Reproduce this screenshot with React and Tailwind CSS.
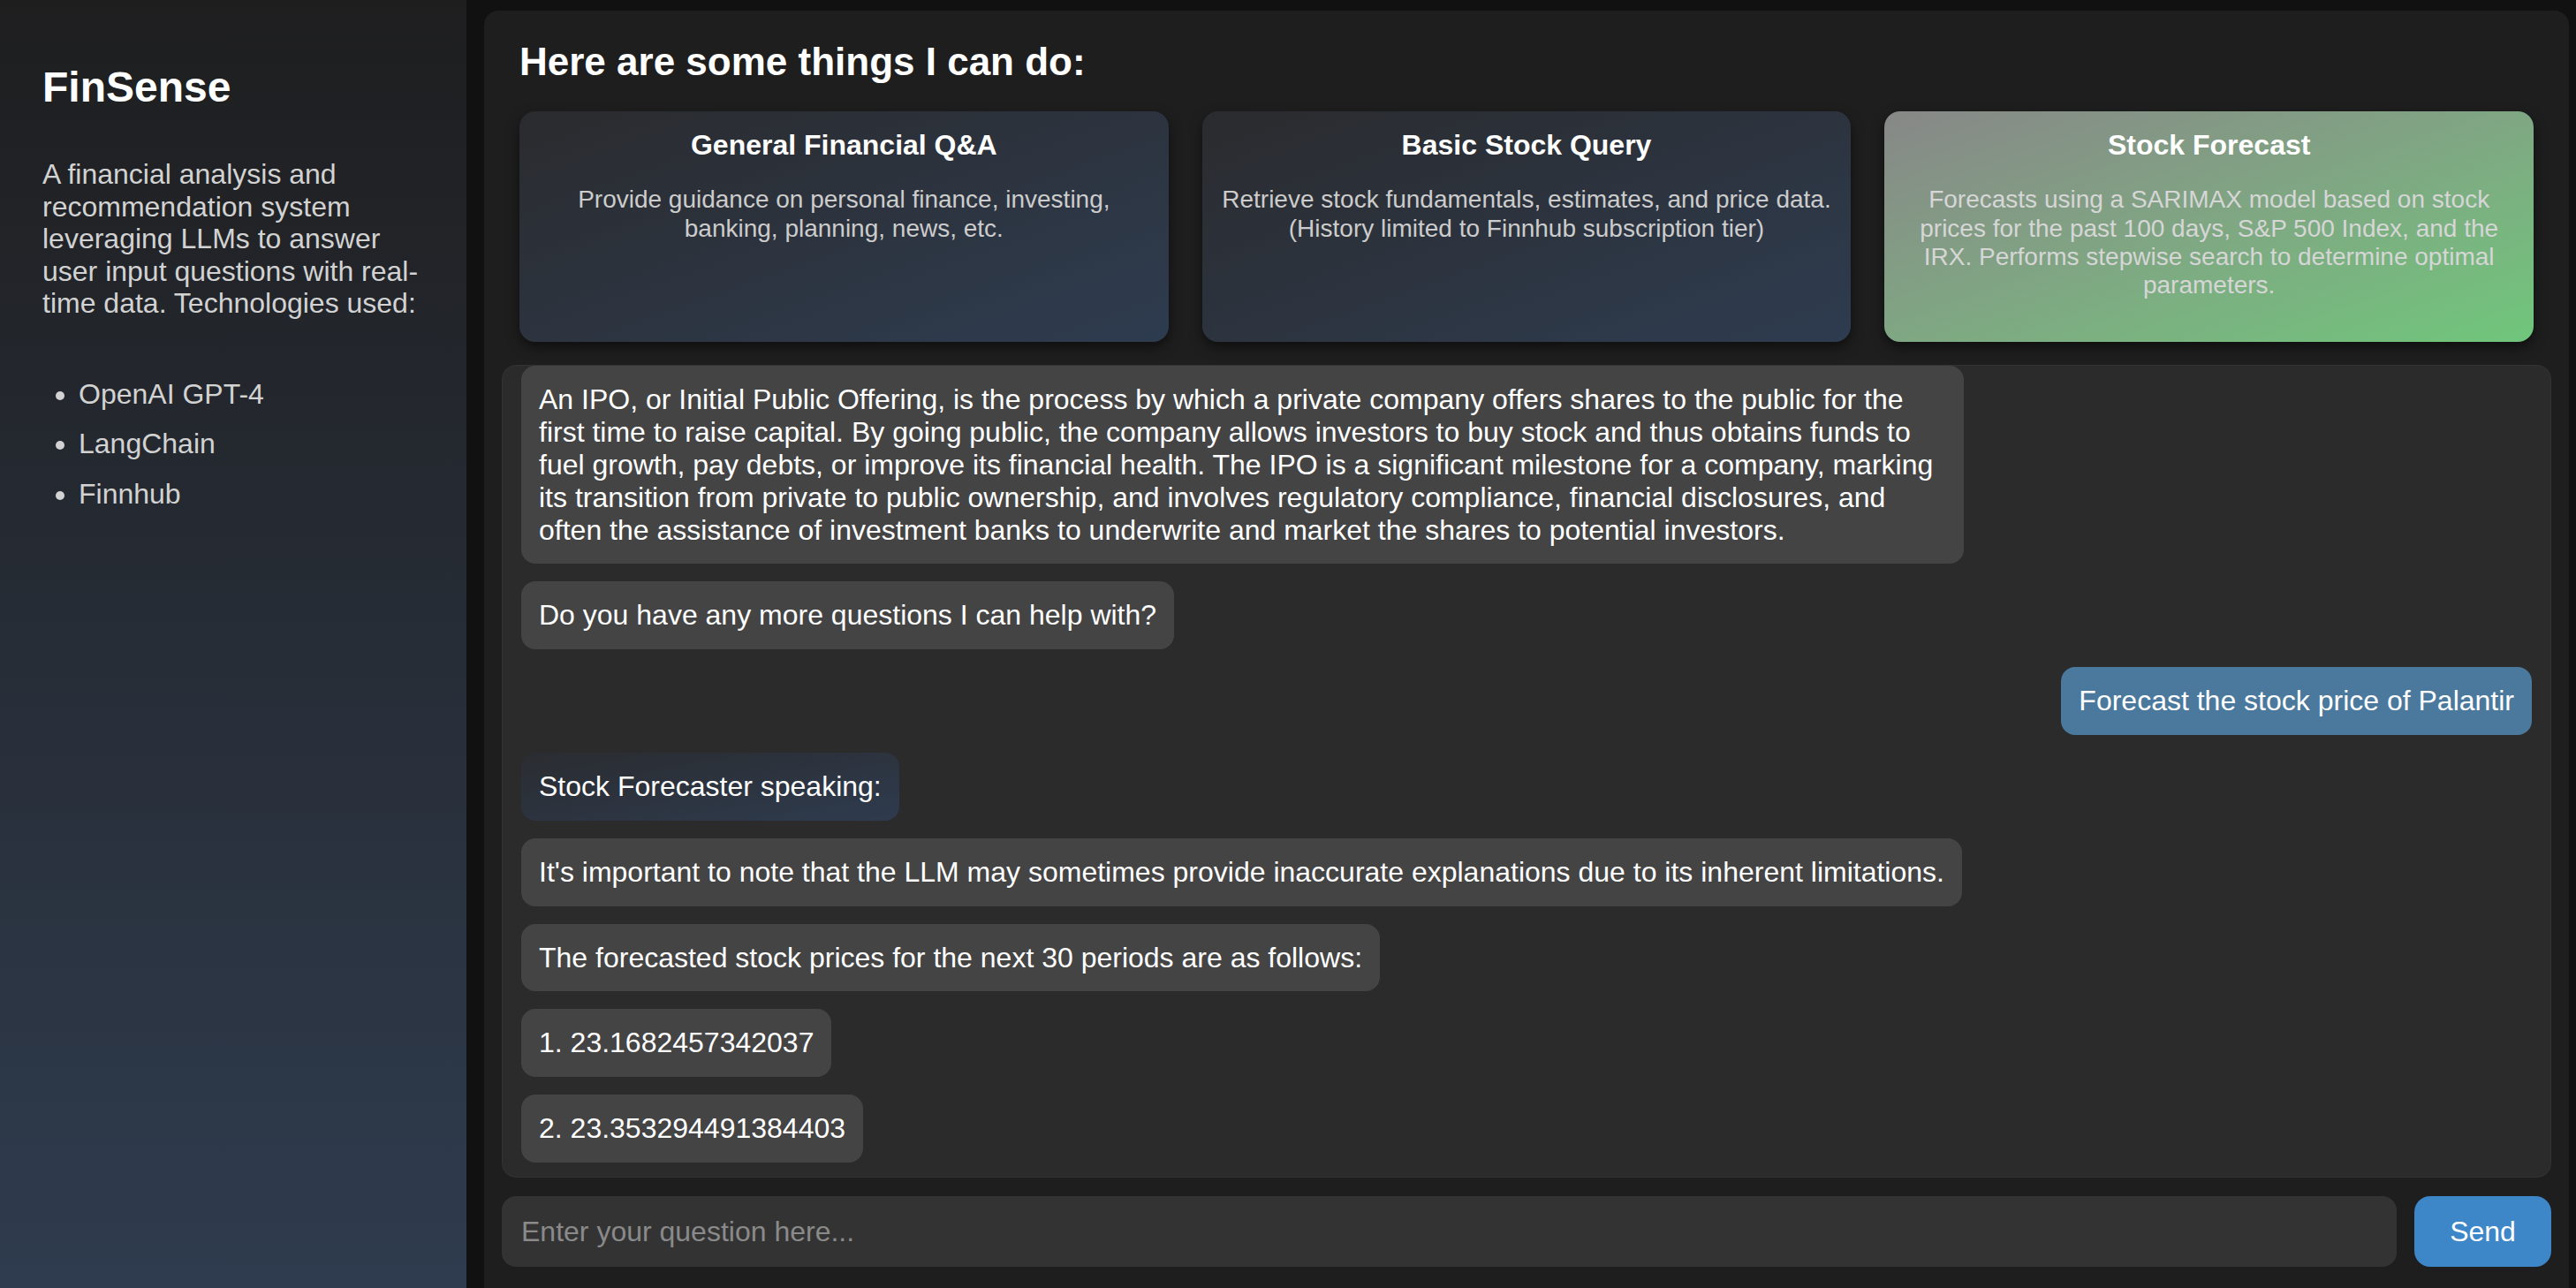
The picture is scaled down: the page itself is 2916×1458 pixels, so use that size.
export default function App() {
  const bubble =
    "box-content max-w-[70%] rounded-[16px] px-[20px] py-[20px] text-[32px] leading-[1.15] text-white";
  return (
    <div className="flex h-screen w-full overflow-hidden bg-[#111111] font-[family-name:'Liberation_Sans',Arial,Helvetica,sans-serif]">
      <aside className="h-full w-[528px] shrink-0 bg-linear-to-b from-[#1e1e1f] to-[#2f3c4f] px-[48px] pt-[71px]">
        <h1 className="text-[48px] font-bold leading-[1.15] text-white">FinSense</h1>
        <p className="mt-[53px] text-[32px] leading-[1.14] text-[#d2d2d2]">
          A financial analysis and recommendation system leveraging LLMs to answer user input questions with real-time data. Technologies used:
        </p>
        <ul className="mt-[66px] list-disc space-y-[20px] pl-[41px] text-[32px] leading-[1.15] text-[#d2d2d2]">
          <li>OpenAI GPT-4</li>
          <li>LangChain</li>
          <li>Finnhub</li>
        </ul>
      </aside>
      <main className="ml-[20px] mr-[8px] mt-[12px] flex h-[calc(100vh-12px)] min-w-0 flex-1 flex-col rounded-t-[16px] bg-[#1e1e1e] px-[20px] pb-[24px] pt-[20px]">
        <div className="px-[20px] pt-[13px]">
          <h2 className="text-[44px] font-bold leading-[1.15] text-white">Here are some things I can do:</h2>
          <div className="mt-[30px] grid grid-cols-3 gap-[38px]">
            <div className="rounded-[18px] bg-linear-to-br from-[#2a2b2e] to-[#2e3c50] px-[20px] pb-[48px] pt-[20px] text-center shadow-[0_6px_14px_rgba(0,0,0,0.5)]">
              <h3 className="text-[32px] font-bold leading-[1.15] text-white">General Financial Q&amp;A</h3>
              <p className="mt-[28px] text-[28px] leading-[1.15] text-[#cccccc]">
                Provide guidance on personal finance, investing, banking, planning, news, etc.
              </p>
            </div>
            <div className="rounded-[18px] bg-linear-to-br from-[#2a2b2e] to-[#2e3c50] px-[20px] pb-[48px] pt-[20px] text-center shadow-[0_6px_14px_rgba(0,0,0,0.5)]">
              <h3 className="text-[32px] font-bold leading-[1.15] text-white">Basic Stock Query</h3>
              <p className="mt-[28px] text-[28px] leading-[1.15] text-[#cccccc]">
                Retrieve stock fundamentals, estimates, and price data. (History limited to Finnhub subscription tier)
              </p>
            </div>
            <div className="rounded-[18px] bg-linear-to-br from-[#878787] to-[#6fc67b] px-[20px] pb-[48px] pt-[20px] text-center shadow-[0_6px_14px_rgba(0,0,0,0.5)]">
              <h3 className="text-[32px] font-bold leading-[1.15] text-white">Stock Forecast</h3>
              <p className="mt-[28px] text-[28px] leading-[1.15] text-[#d6d6d6]">
                Forecasts using a SARIMAX model based on stock prices for the past 100 days, S&amp;P 500 Index, and the IRX. Performs stepwise search to determine optimal parameters.
              </p>
            </div>
          </div>
        </div>
        <div className="mt-[26px] flex min-h-0 flex-1 flex-col justify-end gap-[20px] overflow-hidden rounded-[16px] border border-[#333333] bg-[#2b2b2b] px-[21px] pb-[16px]">
          <div className={`${bubble} shrink-0 self-start bg-[#444444]`}>
            An IPO, or Initial Public Offering, is the process by which a private company offers shares to the public for the first time to raise capital. By going public, the company allows investors to buy stock and thus obtains funds to fuel growth, pay debts, or improve its financial health. The IPO is a significant milestone for a company, marking its transition from private to public ownership, and involves regulatory compliance, financial disclosures, and often the assistance of investment banks to underwrite and market the shares to potential investors.
          </div>
          <div className={`${bubble} shrink-0 self-start bg-[#444444]`}>Do you have any more questions I can help with?</div>
          <div className={`${bubble} shrink-0 self-end bg-[#4a799d]`}>Forecast the stock price of Palantir</div>
          <div className={`${bubble} shrink-0 self-start bg-linear-to-br from-[#2a2c30] to-[#2e3b4e]`}>Stock Forecaster speaking:</div>
          <div className={`${bubble} shrink-0 self-start bg-[#444444]`}>
            It's important to note that the LLM may sometimes provide inaccurate explanations due to its inherent limitations.
          </div>
          <div className={`${bubble} shrink-0 self-start bg-[#444444]`}>The forecasted stock prices for the next 30 periods are as follows:</div>
          <div className={`${bubble} shrink-0 self-start bg-[#444444]`}>1. 23.1682457342037</div>
          <div className={`${bubble} shrink-0 self-start bg-[#444444]`}>2. 23.353294491384403</div>
        </div>
        <div className="mt-[21px] flex h-[80px] shrink-0 gap-[20px]">
          <input
            type="text"
            placeholder="Enter your question here..."
            className="min-w-0 flex-1 rounded-[16px] bg-[#333333] px-[22px] text-[32px] text-white outline-none placeholder:text-[#8a8a8a]"
          />
          <button className="w-[155px] rounded-[18px] bg-[#3d86c8] text-[32px] text-white">Send</button>
        </div>
      </main>
    </div>
  );
}
